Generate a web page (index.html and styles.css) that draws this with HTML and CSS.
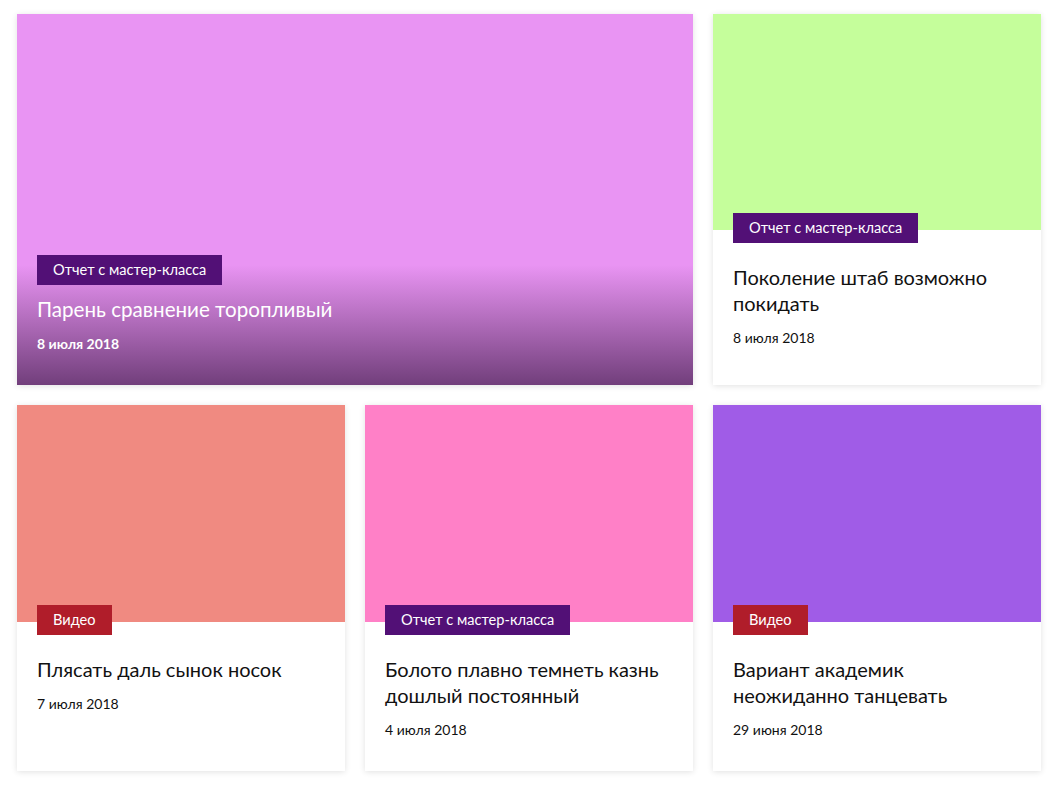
FILE: index.html
```html
<!DOCTYPE html>
<html lang="ru">
<head>
<meta charset="utf-8">
<link rel="stylesheet" href="styles.css">
</head>
<body>
<div class="grid">
  <article class="card card--wide">
    <div class="card__overlay"></div>
    <div class="card__wide-body">
      <span class="tag tag--purple">Отчет с мастер-класса</span>
      <h2 class="card__title">Парень сравнение торопливый</h2>
      <div class="card__date card__date--bold">8 июля 2018</div>
    </div>
  </article>
  <article class="card card--top">
    <div class="card__image img-green"></div>
    <div class="card__body">
      <span class="tag tag--purple">Отчет с мастер-класса</span>
      <h2 class="card__title">Поколение штаб возможно покидать</h2>
      <div class="card__date">8 июля 2018</div>
    </div>
  </article>
  <article class="card">
    <div class="card__image card__image--tall img-salmon"></div>
    <div class="card__body">
      <span class="tag tag--red">Видео</span>
      <h2 class="card__title">Плясать даль сынок носок</h2>
      <div class="card__date">7 июля 2018</div>
    </div>
  </article>
  <article class="card">
    <div class="card__image card__image--tall img-pink"></div>
    <div class="card__body">
      <span class="tag tag--purple">Отчет с мастер-класса</span>
      <h2 class="card__title">Болото плавно темнеть казнь дошлый постоянный</h2>
      <div class="card__date">4 июля 2018</div>
    </div>
  </article>
  <article class="card">
    <div class="card__image card__image--tall img-violet"></div>
    <div class="card__body">
      <span class="tag tag--red">Видео</span>
      <h2 class="card__title">Вариант академик неожиданно танцевать</h2>
      <div class="card__date">29 июня 2018</div>
    </div>
  </article>
</div>
</body>
</html>
```
FILE: styles.css
```css
* { box-sizing: border-box; }
html, body { margin: 0; background: #fff; }
body {
  font-family: Lato, "Noto Sans", sans-serif;
  color: #111;
}
.grid {
  display: grid;
  grid-template-columns: repeat(3, 328px);
  grid-template-rows: 371px 366px;
  column-gap: 20px;
  row-gap: 20px;
  padding: 14px 0 19px 17px;
}
.card {
  position: relative;
  background: #fff;
  box-shadow: 0 1px 6px rgba(0,0,0,0.12);
  display: flex;
  flex-direction: column;
  overflow: hidden;
}
.card--wide {
  grid-column: span 2;
  background: #e994f3;
  justify-content: flex-end;
}
.card__overlay {
  position: absolute;
  left: 0; right: 0; bottom: 0;
  height: 120px;
  background: linear-gradient(to bottom, rgba(50,10,60,0) 0%, rgba(40,10,50,0.62) 100%);
}
.card__wide-body {
  position: relative;
  padding: 0 20px 31px;
  display: flex;
  flex-direction: column;
  align-items: flex-start;
}
.card__wide-body .card__title { color: #fff; margin-top: 11px; font-size: 20.6px; }
.card__wide-body .card__date { color: #fff; margin-top: 12px; }
.card__image { height: 216px; flex: none; }
.card__image--tall { height: 217px; }
.img-green { background: #c5fe9b; }
.img-salmon { background: #f08a81; }
.img-pink { background: #ff80c7; }
.img-violet { background: #a05ce7; }
.card__body {
  padding: 0 20px;
  display: flex;
  flex-direction: column;
  align-items: flex-start;
}
.tag {
  display: inline-block;
  height: 30px;
  line-height: 30px;
  padding: 0 16px;
  font-size: 14.6px;
  color: #fff;
}
.card__body .tag { margin-top: -17px; }
.tag--purple { background: #521076; }
.tag--red { background: #b01d2a; }
.card__title {
  margin: 21px 0 0;
  font-size: 20px;
  line-height: 26px;
  font-weight: 400;
  color: #111;
}
.card__date {
  margin-top: 12px;
  font-size: 14px;
  line-height: 20px;
  color: #111;
}
.card__date--bold { font-weight: 700; }
```
